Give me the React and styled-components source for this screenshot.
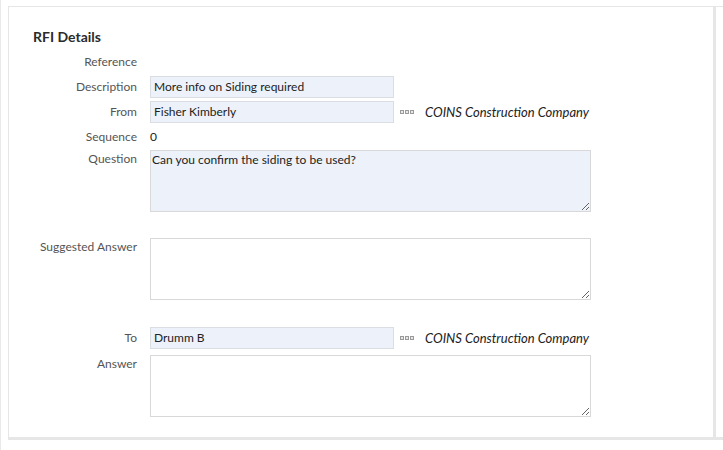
import styled, { createGlobalStyle } from "styled-components";

const GlobalStyle = createGlobalStyle`
  html, body {
    margin: 0;
    padding: 0;
    background: #ffffff;
    font-family: Lato, "Liberation Sans", sans-serif;
  }
`;

const Page = styled.div`
  display: flex;
  align-items: flex-start;
  height: 450px;
  padding: 6px 0 0 7px;
  border-left: 1px solid #e9e9e9;
  box-sizing: border-box;
`;

const Card = styled.section`
  width: 708px;
  box-sizing: border-box;
  border-top: 1px solid #e6e6e6;
  border-left: 1px solid #e6e6e6;
  border-right: 3px solid #e6e6e6;
  border-bottom: 3px solid #e6e6e6;
  padding: 22px 0 20px 24px;
`;

const Filler = styled.div`
  flex: 1;
  align-self: stretch;
  height: 434px;
  box-sizing: border-box;
  border-top: 1px solid #e6e6e6;
  border-bottom: 3px solid #e6e6e6;
`;

const Heading = styled.h2`
  margin: 0 0 6px;
  font-size: 14px;
  line-height: 16px;
  font-weight: 700;
  color: #2b2b2b;
`;

const Form = styled.div`
  display: grid;
  grid-template-columns: 104px 1fr;
  column-gap: 13px;
  row-gap: 3px;
  align-items: start;
`;

const Label = styled.div`
  text-align: right;
  font-size: 12px;
  line-height: ${(p) => (p.$top ? 17 : p.$lh || 22)}px;
  color: #555555;
  white-space: nowrap;
`;

const Cell = styled.div`
  display: flex;
  align-items: flex-start;
  min-height: ${(p) => p.$h || 22}px;
`;

const Spacer = styled.div`
  grid-column: 1 / 3;
  height: ${(p) => p.$h}px;
`;

const Input = styled.div`
  width: 244px;
  height: 22px;
  box-sizing: border-box;
  border: 1px solid #dadde2;
  background: #edf2fa;
  padding: 0 3px;
  font-size: 12px;
  line-height: 20px;
  color: #222222;
`;

const Area = styled.textarea`
  display: block;
  width: 441px;
  height: 62px;
  box-sizing: border-box;
  margin: 0;
  border: 1px solid #d8d8d8;
  background: ${(p) => (p.$filled ? "#edf2fa" : "#ffffff")};
  padding: 1px 1px;
  font-family: Lato, "Liberation Sans", sans-serif;
  font-size: 12px;
  line-height: 16px;
  color: #222222;
  outline: none;
`;

const Value = styled.span`
  font-size: 12px;
  line-height: 21px;
  color: #222222;
`;

const Lookup = styled.span`
  display: inline-flex;
  align-items: center;
  height: 22px;
  margin-left: 6px;
  gap: 11px;
`;

const Company = styled.span`
  font-size: 13px;
  font-style: italic;
  color: #222222;
`;

const Dots = () => (
  <svg width="14" height="4" viewBox="0 0 14 4">
    {[0, 5, 10].map((x) => (
      <rect key={x} x={x + 0.5} y="0.5" width="3" height="3" fill="#e8e8e8" stroke="#9a9a9a" strokeWidth="1" />
    ))}
  </svg>
);

const Row = ({ label, top, h, lh, children }) => (
  <>
    <Label $top={top} $lh={lh}>{label}</Label>
    <Cell $h={h}>{children}</Cell>
  </>
);

export default function App() {
  return (
    <>
      <GlobalStyle />
      <Page>
        <Card>
          <Heading>RFI Details</Heading>
          <Form>
            <Row label="Reference" />
            <Row label="Description">
              <Input>More info on Siding required</Input>
            </Row>
            <Row label="From">
              <Input>Fisher Kimberly</Input>
              <Lookup>
                <Dots />
                <Company>COINS Construction Company</Company>
              </Lookup>
            </Row>
            <Row label="Sequence" h={21} lh={21}>
              <Value>0</Value>
            </Row>
            <Row label="Question" top h={62}>
              <Area $filled readOnly defaultValue="Can you confirm the siding to be used?" />
            </Row>
            <Spacer $h={20} />
            <Row label="Suggested Answer" top h={62}>
              <Area readOnly defaultValue="" />
            </Row>
            <Spacer $h={21} />
            <Row label="To" h={25}>
              <Input>Drumm B</Input>
              <Lookup>
                <Dots />
                <Company>COINS Construction Company</Company>
              </Lookup>
            </Row>
            <Row label="Answer" top h={62}>
              <Area readOnly defaultValue="" />
            </Row>
          </Form>
        </Card>
        <Filler />
      </Page>
    </>
  );
}
